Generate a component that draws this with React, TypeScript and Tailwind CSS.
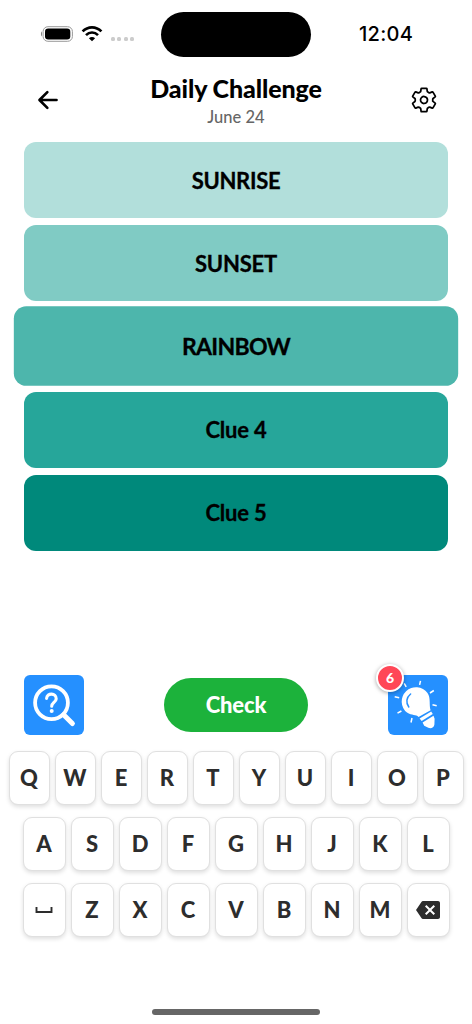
import { useState } from "react";
import { clsx } from "clsx";
import { IoArrowBack, IoSettingsOutline } from "react-icons/io5";
import { MdBackspace } from "react-icons/md";

const clues = [
  { label: "SUNRISE", style: "bg-[#b2dfdb]", text: "tracking-[-0.3px]" },
  { label: "SUNSET", style: "bg-[#80cbc4]", text: "tracking-[-0.2px]" },
  { label: "RAINBOW", style: "bg-[#4db6ac]", text: "tracking-[-0.7px]" },
  { label: "Clue 4", style: "bg-[#26a69a]", text: "tracking-[-0.2px]" },
  { label: "Clue 5", style: "bg-[#00897b]", text: "tracking-[-0.2px]" },
];

const topRow = ["Q", "W", "E", "R", "T", "Y", "U", "I", "O", "P"];
const middleRow = ["A", "S", "D", "F", "G", "H", "J", "K", "L"];
const bottomRow = ["space", "Z", "X", "C", "V", "B", "N", "M", "delete"];

function StatusBar() {
  return (
    <div className="grid h-[57px] grid-cols-[161px_150px_1fr] pt-3">
      <div className="flex h-11 items-center pl-10">
        <svg width="34" height="18" viewBox="0 0 34 18" fill="none">
          <path d="M2 6.6C.6 7.2.6 10.8 2 11.4Z" fill="#888" />
          <rect x="3.1" y="1.7" width="29.3" height="14.6" rx="4.8" stroke="#999" />
          <rect x="5" y="3.6" width="25.3" height="10.8" rx="3.2" fill="#000" />
        </svg>
        <svg className="ml-[7px]" width="22" height="18" viewBox="0 0 22 18" fill="none" stroke="#000">
          <path d="M1.6 6.4C7 .9 15 .9 20.4 6.4" strokeWidth="2.7" />
          <path d="M5 10.1C8.4 6.6 13.6 6.6 17 10.1" strokeWidth="2.6" />
          <path d="M11 16.3L7.9 13.2C9.6 11.5 12.4 11.5 14.1 13.2Z" fill="#000" stroke="none" />
        </svg>
        <div className="mt-[10px] ml-[8px] flex gap-[2.4px]">
          {[0, 1, 2, 3].map((dot) => (
            <span key={dot} className="h-1 w-1 rounded-[1.5px] bg-[#ccc]" />
          ))}
        </div>
      </div>
      <div className="h-[45px] rounded-full bg-black" />
      <div className="flex h-11 items-center pl-[48px] font-['Inter',sans-serif] text-[20px] font-medium tracking-[0.3px] text-black">
        12:04
      </div>
    </div>
  );
}

function Header() {
  return (
    <header className="flex h-[85px] items-center justify-between px-[34px]">
      <button aria-label="Back">
        <IoArrowBack size={28} />
      </button>
      <div className="flex flex-col items-center pt-[2px]">
        <h1 className="text-[25px] leading-[30px] font-black tracking-[-0.1px] whitespace-nowrap">Daily Challenge</h1>
        <p className="mt-[3px] text-[16.5px] leading-[22px] font-medium text-[#666]">June 24</p>
      </div>
      <button aria-label="Settings">
        <IoSettingsOutline size={28} />
      </button>
    </header>
  );
}

function HelpIcon() {
  return (
    <svg width="60" height="60" viewBox="0 0 60 60" fill="none" stroke="#fff" strokeLinecap="round">
      <circle cx="27.5" cy="27.7" r="16.4" strokeWidth="3.8" />
      <path d="M39.6 39.8L48.4 48.6" strokeWidth="5" />
      <path d="M22.6 23.4C23 17.4 32.4 17.8 32.2 23.8C32 27.2 27.7 27.8 27.7 31.2" strokeWidth="3.1" />
      <circle cx="27.7" cy="36" r="2" fill="#fff" stroke="none" />
    </svg>
  );
}

function BulbIcon() {
  return (
    <svg width="60" height="60" viewBox="0 0 60 60" fill="none">
      <path
        d="M30.5 41.9C28.3 39.6 23.8 40.7 19 37.6A14.3 14.3 0 1 1 39.5 18C43 23 40.8 30 42.6 35.2Z"
        fill="#fff"
      />
      <path d="M22.6 19C18.4 22.4 17.6 27.8 20.8 32" stroke="#2590ff" strokeWidth="1.5" strokeLinecap="round" />
      <path d="M31.6 43.4L43.2 36.4L44.8 39.1L33.6 46.1Z" fill="#fff" />
      <path d="M34.6 47.5L45.5 40.7L46.6 43.8L46.4 49.5C45.9 53.2 42.4 53.8 40.3 52.7L36.2 50.8Z" fill="#fff" />
      <path
        d="M16.2 8.3L18.2 11.8M32.5 5.8L31.6 9.9M45.8 15.5L42 18M48.7 30.8L44.5 29.8M6.7 21.7L11.2 22.7M9.5 38.2L13.4 36M23 47.5L24 43"
        stroke="#fff"
        strokeWidth="1.5"
      />
    </svg>
  );
}

function Key({ name, wide, onPress }: { name: string; wide?: boolean; onPress: (name: string) => void }) {
  let face: React.ReactNode = name;
  if (name === "delete") face = <MdBackspace size={24} />;
  if (name === "space") {
    face = (
      <svg width="18" height="8" viewBox="0 0 18 8" fill="none" stroke="#2d2d2d" strokeWidth="1.9">
        <path d="M1.5 1V6H16.5V1" />
      </svg>
    );
  }

  return (
    <button
      aria-label={name}
      onClick={() => onPress(name)}
      className={clsx(
        "flex h-[54px] items-center justify-center rounded-[9px] border border-[#e0e0e0] bg-white text-[22px] font-black text-[#2d2d2d] shadow-[0_2px_4px_rgba(0,0,0,0.13)]",
        wide ? "w-[43px]" : "w-[41px]",
      )}
    >
      {face}
    </button>
  );
}

export default function App() {
  const [active, setActive] = useState(2);
  const [guess, setGuess] = useState("");

  function handleKey(name: string) {
    if (name === "delete") setGuess(guess.slice(0, -1));
    else setGuess(guess + (name === "space" ? " " : name));
  }

  return (
    <main className="flex h-[1024px] w-[472px] flex-col overflow-hidden bg-white font-['Lato',sans-serif] text-black">
      <StatusBar />
      <Header />

      <section className="flex flex-col gap-[7.2px] px-6">
        {clues.map((clue, i) => (
          <button
            key={clue.label}
            onClick={() => setActive(i)}
            className={clsx(
              "flex h-[76px] items-center justify-center rounded-xl text-[22px] font-bold",
              clue.style,
              i === active && "scale-[1.048]",
            )}
          >
            <span className={clsx("[-webkit-text-stroke:0.3px_black]", clue.text)}>{clue.label}</span>
          </button>
        ))}
      </section>

      <section className="mt-[124px] flex items-center justify-between px-6">
        <button aria-label="Help" className="rounded-[6px] bg-[#2590ff]">
          <HelpIcon />
        </button>
        <button onClick={() => setGuess("")} className="h-[54px] w-36 rounded-full bg-[#1cb23b] text-[22px] font-black tracking-[-0.2px] text-white">
          Check
        </button>
        <button aria-label="Hint" className="relative rounded-[6px] bg-[#2590ff]">
          <BulbIcon />
          <span className="absolute -top-[11px] -left-[12px] flex h-7 w-7 items-center justify-center rounded-full border-2 border-white bg-[#ff4757] text-[14px] font-black text-white shadow-[0_1px_4px_rgba(0,0,0,0.35)]">
            6
          </span>
        </button>
      </section>

      <section className="mt-4 flex flex-col items-center gap-3">
        <div className="flex gap-[5px]">
          {topRow.map((name) => (
            <Key key={name} name={name} onPress={handleKey} />
          ))}
        </div>
        <div className="flex gap-[5px]">
          {middleRow.map((name) => (
            <Key key={name} name={name} wide onPress={handleKey} />
          ))}
        </div>
        <div className="flex gap-[5px]">
          {bottomRow.map((name) => (
            <Key key={name} name={name} wide onPress={handleKey} />
          ))}
        </div>
      </section>

      <div className="mx-auto mt-auto mb-[9px] h-[6px] w-[168px] rounded-full bg-[#666]" />
    </main>
  );
}
